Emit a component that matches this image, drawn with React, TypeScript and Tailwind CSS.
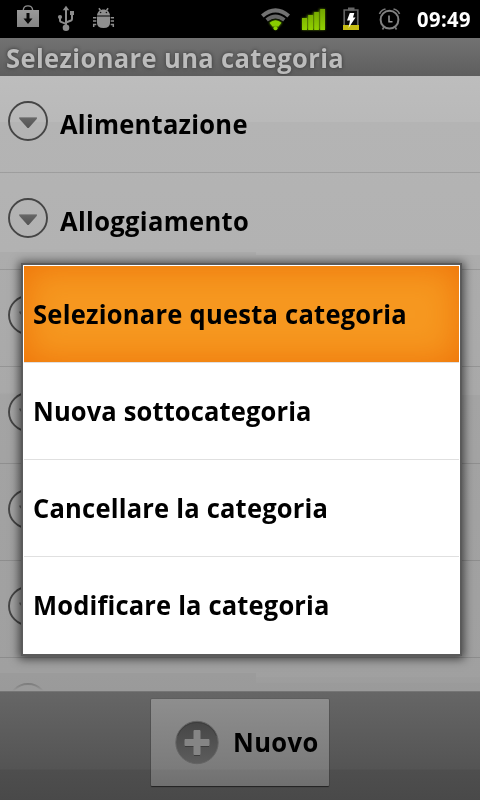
import React from "react";

const FONT = "font-['Open_Sans','Noto_Sans',sans-serif] font-bold";

// Horizontal condensing of the bold face
const CONDENSE = 0.96;

function Label({ text, width, size = 26.6 }: { text: string; width: number; size?: number }) {
  const ref = React.useRef<HTMLSpanElement>(null);
  const [spacing, setSpacing] = React.useState(0);
  React.useLayoutEffect(() => {
    const fit = () => {
      const el = ref.current;
      if (!el) return;
      el.style.letterSpacing = "0px";
      const gap = (width / CONDENSE - el.offsetWidth) / text.length;
      el.style.letterSpacing = `${gap}px`;
      setSpacing(gap);
    };
    fit();
    document.fonts.ready.then(fit);
  }, [text, width]);
  return (
    <span ref={ref} className="inline-block origin-left scale-x-96 whitespace-nowrap" style={{ fontSize: size, letterSpacing: spacing }}>
      {text}
    </span>
  );
}

function Expander() {
  return (
    <svg className="-mt-[6px] shrink-0" width="42" height="42" viewBox="0 0 42 42">
      <defs>
        <linearGradient id="tri" x1="0" y1="0" x2="0" y2="1">
          <stop offset="0" stopColor="#666" />
          <stop offset="1" stopColor="#535353" />
        </linearGradient>
      </defs>
      <circle cx="21" cy="21" r="19" fill="none" stroke="#454545" strokeWidth="1.9" />
      <path d="M12.700 17.600h16.800q1 .2.200 1.300L21.700 28h-1.200L12.500 18.900q-.8-1.100.2-1.300z" fill="url(#tri)" />
      <path d="M12.300 17.600h17.600" stroke="#858585" strokeWidth=".9" />
    </svg>
  );
}

function StatusBar() {
  return (
    <header className="flex h-[38px] shrink-0 bg-black">
      <svg width="408" height="38" viewBox="0 0 408 38">
        <defs>
          <linearGradient id="steel" x1="0" y1="0" x2="0" y2="1">
            <stop offset="0" stopColor="#999" />
            <stop offset="1" stopColor="#858585" />
          </linearGradient>
          <linearGradient id="bars" x1="0" y1="0" x2="0" y2="1">
            <stop offset="0" stopColor="#72a500" />
            <stop offset="1" stopColor="#91d000" />
          </linearGradient>
          <filter id="glow" x="-30%" y="-30%" width="160%" height="160%">
            <feGaussianBlur stdDeviation="1.3" />
          </filter>
        </defs>
        {/* download bag */}
        <path d="M17 10h22v17H17z" fill="url(#steel)" />
        <path d="M23.3 10c.4-5.500 8.900-5.500 9.300 0" fill="none" stroke="#8d8d8d" strokeWidth="1.4" />
        <path d="M26.500 13h3v5.500h3L28 24l-4.500-5.500h3z" fill="#080808" />
        {/* usb */}
        <g fill="none" stroke="#8c8c8c" strokeWidth="2">
          <path d="M66 10v17M60 17v3.500q0 1 1 1.400l5 2M72 14.500V19q0 1-1 1.500l-5 2" />
        </g>
        <g fill="#8c8c8c">
          <path d="M66 5.700l3.300 4.600h-6.600z" />
          <circle cx="60" cy="17" r="2.100" />
          <path d="M70 11h4v4h-4z" />
          <circle cx="66" cy="27.700" r="3.300" />
        </g>
        {/* debug robot */}
        <g fill="#8f8f8f">
          <path d="M97 15.400c.6-8 12.400-8 13 0z" />
          <path d="M97 16.500h13V23q0 5-6.500 5T97 23z" />
        </g>
        <g fill="none" stroke="#8f8f8f" strokeWidth="1.500">
          <path d="M100.500 10.500l-1.600-2.300M106.500 10.500l1.600-2.300" />
          <path d="M96.300 17.800H93M96.300 21h-3.300M96.300 24.500h-2.600v2.500M110.700 17.800h3.300M110.700 21h3.300M110.700 24.500h2.600v2.500" />
        </g>
        <circle cx="100.600" cy="12.500" r=".8" fill="#111" />
        <circle cx="106.400" cy="12.500" r=".8" fill="#111" />
        {/* wifi */}
        <path d="M261 14.500Q275.500 2 290 14.500l-2.600 3Q275.500 7.300 263.600 17.500z" fill="#727272" />
        <path d="M265.500 18.500q10-8 20 0l-2.300 3q-7.700-6.200-15.400 0z" fill="#666" />
        <path d="M269 22.700q6.500-5 13 0L275.500 30z" fill="#81c800" filter="url(#glow)" opacity=".8" />
        <path d="M269.500 22.700q6-5 12 0l-3.300 4q-2.700-2-5.400 0z" fill="#89cc00" />
        <circle cx="275.500" cy="28.200" r="2" fill="#8ed000" />
        {/* signal */}
        <path d="M302 18h5v-3h6v-3h6V9h6v21h-23z" fill="#547b00" filter="url(#glow)" />
        <path d="M302 18h5v12h-5zM308.200 15h4.900v15h-4.900zM314.200 12h4.700v18h-4.700zM320.200 9h4.800v21h-4.800z" fill="url(#bars)" />
        {/* battery */}
        <path d="M344.200 10h13.600v19h-13.600z" fill="#080808" stroke="#626262" strokeWidth="1.700" />
        <path d="M348 7.500h6.500v3H348z" fill="#666" />
        <path d="M343 25h16v5h-16z" fill="#c7bd13" />
        <path d="M349.800 13h4.500l-1.300 4.500h2.500L348.500 28l1.500-7.500h-3z" fill="#fff" />
        {/* alarm */}
        <circle cx="389.500" cy="19.700" r="8.900" fill="none" stroke="#818181" strokeWidth="2" />
        <path d="M389 15.500v6.300h3.500" fill="none" stroke="#999" strokeWidth="1.500" />
        <path d="M379.500 14q1.500-4 6-5M399.500 14q-1.500-4-6-5M384 27l-1.500 2.500M395 27l1.500 2.500" fill="none" stroke="#777" strokeWidth="1.700" />
      </svg>
      <div className="flex items-center pl-[9px] pt-[2px] text-white">
        <Label text="09:49" width={54} size={21} />
      </div>
    </header>
  );
}

const ROWS = ["Alimentazione", "Alloggiamento", "", "", "", "", ""];
const ACTIONS = [
  { text: "Selezionare questa categoria", width: 373.5 },
  { text: "Nuova sottocategoria", width: 279 },
  { text: "Cancellare la categoria", width: 295.5 },
  { text: "Modificare la categoria", width: 296.5 },
];

export default function App() {
  return (
    <div className={`relative flex h-[800px] w-[480px] flex-col overflow-hidden bg-black text-black ${FONT}`}>
      <StatusBar />
      <div className="flex h-[38px] shrink-0 items-center bg-linear-to-b from-[#727272] to-[#5e5e5e] pl-[5.500px] pt-[3px] leading-none text-[#bcbcbc] [text-shadow:0_0_4px_#333]">
        <Label text="Selezionare una categoria" width={338.5} />
      </div>
      <main className="relative h-[615px] shrink-0 overflow-hidden bg-[linear-gradient(#bdbdbd_0px,#b9b9b9_46px,#b4b4b4_46px,#b2b2b2_176px,#acacac_176px,#a9a9a9_316px,#a4a4a4_319px,#a2a2a2_440px,#a0a0a0_597px,#9b9b9b_597px,#9a9a9a_615px),linear-gradient(#bdbdbd_0px,#b9b9b9_46px,#b4b4b4_46px,#b2b2b2_179px,#acacac_179px,#a9a9a9_319px,#a4a4a4_319px,#a2a2a2_440px,#a0a0a0_607px,#9b9b9b_607px,#9a9a9a_615px)] bg-[size:256px_100%,100%_100%] bg-no-repeat">
        {ROWS.map((name, i) => (
          <div key={i} className="flex h-[97px] items-center border-b border-black/12 pl-[7px]">
            <Expander />
            <div className="ml-[11px] leading-none">
              {name && <Label text={name} width={i === 0 ? 187.5 : 189.5} />}
            </div>
          </div>
        ))}
        {/* fading edge of the scrolling list */}
        <div className="absolute inset-x-0 bottom-0 h-[14px] bg-linear-to-b from-[#9b9b9b]/35 to-[#9a9a9a]" />
      </main>
      <footer className="flex h-[109px] shrink-0 justify-center border-t border-[#757575] bg-[linear-gradient(#666,#545454_77px,#4e4e4e_78px,#494949)] pt-[7px]">
        <button className="flex h-[87px] w-[178px] items-center rounded-[1px] bg-[linear-gradient(#8e8e8e,#7b7b7b_70px,#767676_71px,#707070)] pl-[22px] shadow-[0_1px_1px_#222,0_0_1px_#222]">
          <svg className="shrink-0" width="48" height="48" viewBox="0 0 48 48">
            <defs>
              <linearGradient id="disc" x1="0" y1="0" x2="0" y2="1">
                <stop offset="0" stopColor="#454545" />
                <stop offset="1" stopColor="#5d5d5d" />
              </linearGradient>
            </defs>
            <circle cx="24" cy="23.500" r="21.200" fill="url(#disc)" stroke="#646464" />
            <path d="M4.500 17a20.800 20.800 0 0 1 39 0" fill="none" stroke="#343434" strokeOpacity=".5" />
            <path d="M21 13h6v9h9v6h-9v9h-6v-9h-9v-6h9z" fill="#333" opacity=".7" />
            <path d="M21 11.500h6V20.500h9v6h-9v9h-6v-9h-9v-6h9z" fill="#858585" stroke="#858585" strokeLinejoin="round" />
          </svg>
          <div className="ml-[11.500px] leading-none">
            <Label text="Nuovo" width={85.5} />
          </div>
        </button>
      </footer>
      {/* context menu over the list */}
      <div className="absolute left-[23px] top-[265px] flex h-[389px] w-[437px] flex-col bg-white p-px pb-0 shadow-[0_0_0_2px_#5b5b5b,0_1px_9px_4px_rgba(0,0,0,0.6)]">
        {ACTIONS.map((a, i) => (
          <div
            key={a.text}
            className={`flex h-[97px] shrink-0 items-center pl-[8.500px] leading-none ${
              i === 0 ? "bg-[#f69820] bg-clip-padding shadow-[inset_0_0_36px_#ee7208]" : ""
            } ${i < 3 ? "border-b border-[#e0e0e0]" : ""}`}
          >
            <Label text={a.text} width={a.width} />
          </div>
        ))}
      </div>
    </div>
  );
}
